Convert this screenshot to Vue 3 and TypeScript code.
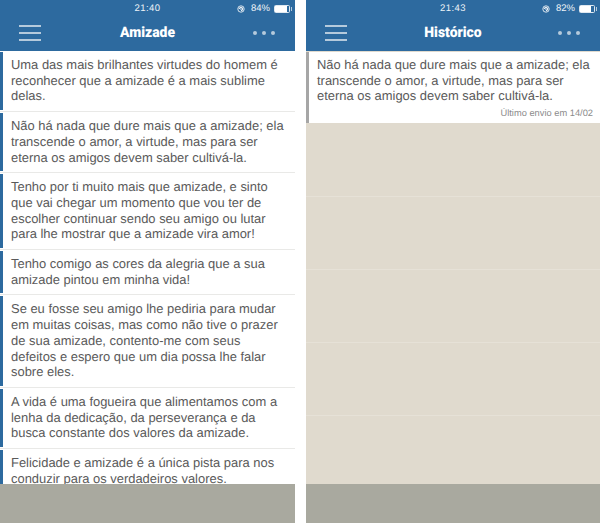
<script setup lang="ts">
const left: string[] = [
  'Uma das mais brilhantes virtudes do homem é reconhecer que a amizade é a mais sublime delas.',
  'Não há nada que dure mais que a amizade; ela transcende o amor, a virtude, mas para ser eterna os amigos devem saber cultivá-la.',
  'Tenho por ti muito mais que amizade, e sinto que vai chegar um momento que vou ter de escolher continuar sendo seu amigo ou lutar para lhe mostrar que a amizade vira amor!',
  'Tenho comigo as cores da alegria que a sua amizade pintou em minha vida!',
  'Se eu fosse seu amigo lhe pediria para mudar em muitas coisas, mas como não tive o prazer de sua amizade, contento-me com seus defeitos e espero que um dia possa lhe falar sobre eles.',
  'A vida é uma fogueira que alimentamos com a lenha da dedicação, da perseverança e da busca constante dos valores da amizade.',
  'Felicidade e amizade é a única pista para nos conduzir para os verdadeiros valores.',
]
</script>

<template>
  <div class="page">
    <section class="phone">
      <header class="head">
        <div class="status">
          <span class="time">21:40</span>
          <span class="right">
            <svg class="lock" viewBox="0 0 10 10"><circle cx="5" cy="5" r="4" fill="none" stroke="#fff" stroke-width="1" /><path d="M2.8 5a2.2 2.2 0 1 1 2.2 2.2" fill="none" stroke="#fff" stroke-width="1.2" /><circle cx="5" cy="5" r="1" fill="#fff" /></svg>
            <span>84%</span>
            <span class="batt"><span class="fill f84"></span></span>
          </span>
        </div>
        <div class="nav">
          <span class="burger"><i></i><i></i><i></i></span>
          <span class="title">Amizade</span>
          <span class="dots"><i></i><i></i><i></i></span>
        </div>
      </header>
      <div class="list">
        <article v-for="(t, i) in left" :key="i" class="item">
          <p class="txt">{{ t }}</p>
        </article>
      </div>
      <div class="foot"></div>
    </section>

    <section class="phone beige">
      <header class="head">
        <div class="status">
          <span class="time">21:43</span>
          <span class="right">
            <svg class="lock" viewBox="0 0 10 10"><circle cx="5" cy="5" r="4" fill="none" stroke="#fff" stroke-width="1" /><path d="M2.8 5a2.2 2.2 0 1 1 2.2 2.2" fill="none" stroke="#fff" stroke-width="1.2" /><circle cx="5" cy="5" r="1" fill="#fff" /></svg>
            <span>82%</span>
            <span class="batt"><span class="fill f82"></span></span>
          </span>
        </div>
        <div class="nav">
          <span class="burger"><i></i><i></i><i></i></span>
          <span class="title">Histórico</span>
          <span class="dots"><i></i><i></i><i></i></span>
        </div>
      </header>
      <article class="item hist">
        <p class="txt">Não há nada que dure mais que a amizade; ela transcende o amor, a virtude, mas para ser eterna os amigos devem saber cultivá-la.</p>
        <p class="last">Último envio em 14/02</p>
      </article>
      <div class="rows"><div v-for="n in 5" :key="n" class="row"></div></div>
      <div class="foot"></div>
    </section>
  </div>
</template>

<style scoped>
.page {
  width: 600px;
  height: 523px;
  display: flex;
  justify-content: space-between;
  background: #fff;
  overflow: hidden;
  font-family: "Liberation Sans", Arial, sans-serif;
  text-rendering: geometricPrecision;
}
.phone {
  position: relative;
  width: 295px;
  height: 523px;
  overflow: hidden;
  background: #fff;
}
.phone.beige {
  width: 294px;
  background: #e0dace;
}
.head {
  height: 51px;
  background: #2d6a9f;
  color: #fff;
}
.status {
  position: relative;
  height: 16px;
  display: flex;
  justify-content: center;
  align-items: center;
  font-size: 9.5px;
  box-sizing: border-box;
  color: #eef3f8;
}
.time {
  letter-spacing: 0.4px;
}
.right {
  position: absolute;
  right: 5px;
  top: 2px;
  display: flex;
  align-items: center;
  height: 13px;
}
.lock {
  width: 8px;
  height: 8px;
  margin-right: 6px;
}
.batt {
  position: relative;
  width: 14px;
  height: 6px;
  margin-left: 4px;
  border: 1px solid #dfe8f0;
  border-radius: 1.5px;
  display: flex;
}
.batt::after {
  content: "";
  position: absolute;
  right: -3px;
  top: 1px;
  width: 1px;
  height: 4px;
  background: #b5cadc;
}
.fill {
  background: #fff;
  height: 100%;
}
.f84 { width: 84%; }
.f82 { width: 82%; }
.nav {
  height: 33px;
  display: flex;
  align-items: center;
  justify-content: space-between;
  padding: 0 20px 0 19px;
  position: relative;
}
.burger {
  width: 22px;
  display: flex;
  flex-direction: column;
  gap: 5px;
}
.burger i {
  display: block;
  height: 2px;
  background: #b5cadc;
}
.title {
  position: absolute;
  left: 0;
  right: 0;
  text-align: center;
  font-size: 14.5px;
  font-weight: 900;
  font-family: "Roboto", "Liberation Sans", sans-serif;
  color: #fff;
  transform: scaleX(0.96);
}
.dots {
  display: flex;
  gap: 5px;
}
.dots i {
  width: 4px;
  height: 4px;
  border-radius: 50%;
  background: #b5cadc;
}
.list {
  display: flex;
  flex-direction: column;
  padding-top: 1px;
}
.item {
  box-sizing: border-box;
  background: #fff;
  border-left: 3px solid #2d6a9f;
  padding: 5px 8px 6px 8px;
  margin-bottom: 3px;
  position: relative;
}
.item::after {
  content: "";
  position: absolute;
  left: -3px;
  right: 0;
  bottom: -2px;
  height: 1px;
  background: #e9e9e7;
}
.txt {
  margin: 0;
  font-size: 12.95px;
  line-height: 15.7px;
  color: #5a5a5a;
}
.hist {
  border-left-color: #a6a6a6;
  margin: 1px 0 0;
  height: 71px;
  padding-right: 7px;
}
.hist::after {
  display: none;
}
.last {
  margin: 4px 0 0;
  text-align: right;
  font-size: 9.3px;
  line-height: 11px;
  color: #8b8b8b;
}
.rows {
  display: flex;
  flex-direction: column;
  padding-top: 1px;
}
.row {
  height: 73px;
  box-sizing: border-box;
  border-bottom: 1px solid #e6e1d7;
}
.foot {
  position: absolute;
  left: 0;
  right: 0;
  bottom: 0;
  height: 39px;
  background: #a9a99f;
}
</style>
